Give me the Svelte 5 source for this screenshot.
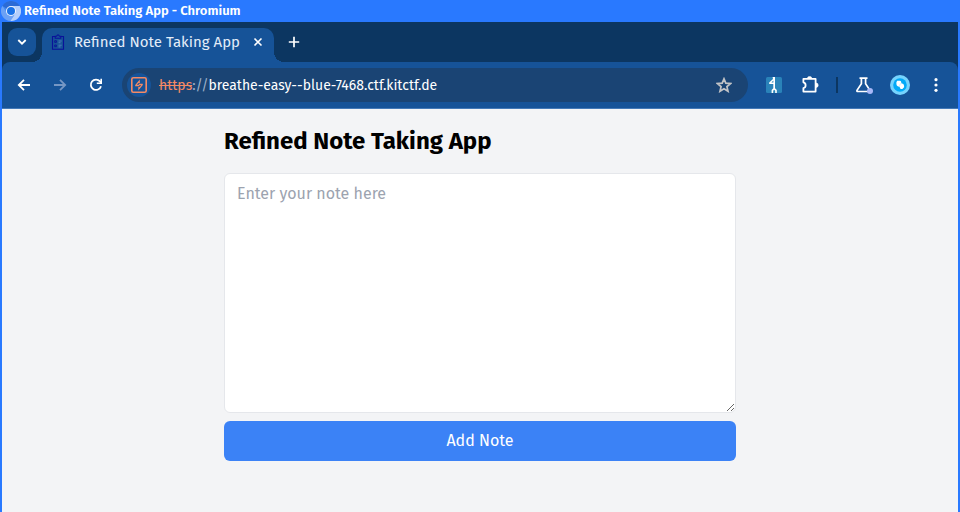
<script>
  let note = $state('');
  let notes = $state([]);
  let host = $state('breathe-easy--blue-7468.ctf.kitctf.de');

  function addNote(event) {
    event.preventDefault();
    if (note.trim()) notes.push(note.trim());
    note = '';
  }
</script>

<div class="window">
  <div class="titlebar">
    <svg width="20" height="20" viewBox="0 0 20 20" aria-hidden="true">
      <circle cx="10" cy="10" r="10" fill="#4488ee" />
      <path d="M10 10 1.4 4.9A10 10 0 0 1 18.7 5Z" fill="#2b6bd6" />
      <path d="M1.4 4.9A10 10 0 0 0 10 20L14 12 6 12Z" fill="#6ba1f5" />
      <path d="M10 5H18.7A10 10 0 0 1 9.5 20L14.3 12.5Z" fill="#b4cffb" />
      <circle cx="10" cy="10" r="5" fill="#eef4ff" />
      <circle cx="10" cy="10" r="4" fill="#1a73e8" />
    </svg>
    <span>Refined Note Taking App - Chromium</span>
  </div>

  <div class="frame">
    <div class="tabs">
      <button class="search" aria-label="Search tabs">
        <svg width="10" height="8" viewBox="0 0 10 8"><path d="M1.3 2 5 5.7 8.7 2" fill="none" stroke="#fff" stroke-width="1.8" /></svg>
      </button>
      <div class="tab">
        <svg width="16" height="16" viewBox="0 0 16 16" fill="none" stroke="#0a1299" aria-hidden="true">
          <path d="M5 2.5H2.5V15.3H13.5V2.5H11" stroke-width="1.1" />
          <path d="M5.2 4.2V2.2H6.5Q8-.4 9.5 2.2h1.3v2Z" stroke-width="1.1" />
          <path d="M4.7 6.7h1.7v1.7H4.7zM4.7 11h1.7v1.7H4.7z" stroke-width=".9" />
          <path d="M8.5 7h3.2M8.5 8.7h2M8.5 11.2h3.2M8.5 12.9h2" stroke="#4f7fbd" stroke-width=".9" />
        </svg>
        <span>Refined Note Taking App</span>
        <button class="close" aria-label="Close tab">
          <svg width="10" height="10" viewBox="0 0 10 10"><path d="m1.5 1.5 7 7m0-7-7 7" stroke="#fff" stroke-width="1.6" /></svg>
        </button>
      </div>
      <button class="new" aria-label="New tab">
        <svg width="12" height="12" viewBox="0 0 12 12"><path d="M6 .8v10.4M.8 6h10.4" stroke="#fff" stroke-width="1.7" /></svg>
      </button>
    </div>

    <div class="toolbar">
      <button class="tool" aria-label="Back">
        <svg width="14" height="14" viewBox="0 0 14 14" fill="none" stroke="#fff" stroke-width="1.8"><path d="M13 7H2M7 1.8 1.8 7 7 12.2" /></svg>
      </button>
      <button class="tool" aria-label="Forward" disabled>
        <svg width="14" height="14" viewBox="0 0 14 14" fill="none" stroke="#7697c4" stroke-width="1.8"><path d="M1 7h11M7 1.8 12.2 7 7 12.2" /></svg>
      </button>
      <button class="tool" aria-label="Reload">
        <svg width="14" height="14" viewBox="0 0 14 14"><path d="M12 8.2A5.2 5.2 0 1 1 11 3.4L12 4.6" fill="none" stroke="#fff" stroke-width="1.8" /><path d="M13 .8V6H7.8V4.4H11.4V.8Z" fill="#fff" /></svg>
      </button>

      <div class="omnibox">
        <button class="site" aria-label="View site information">
          <svg width="16" height="16" viewBox="0 0 16 16"><rect x=".8" y=".8" width="14.4" height="14.4" rx="1.5" fill="none" stroke="#f58a64" stroke-width="1.6" /><path d="M8.8 2.6V6H7.4L6 7.9H8.4V9.2H4.2V8.1ZM7.3 13.4V10H8.7L10 8.1H7.7V6.8H11.8V7.9Z" fill="#f58a64" /></svg>
        </button>
        <label for="address"><s>https</s><span>://</span></label>
        <input id="address" type="text" bind:value={host} spellcheck="false" />
        <button class="star" aria-label="Bookmark this tab">
          <svg width="16" height="16" viewBox="0 0 24 24"><path d="m12 2.8 2.7 6.5 7 .6-5.3 4.6 1.6 6.9-6-3.7-6 3.7 1.6-6.9-5.3-4.6 7-.6Z" fill="none" stroke="#c1c3c6" stroke-width="2.6" /></svg>
        </button>
      </div>

      <button class="tool" aria-label="Proxy extension">
        <svg width="16" height="16" viewBox="0 0 16 16"><rect width="16" height="16" rx="1.5" fill="#2a83b9" /><path d="M6.6 0H9V11.2L10.8 13v3H9.2V13.8L8.2 12.8 7.2 13.8V16H5.6V13L7.3 11.3V7H3.2V5.6L7 2Z" fill="#fff" /><path d="m5.4 5.5 2-2.1v2.1Z" fill="#2a83b9" /></svg>
      </button>
      <button class="tool" aria-label="Extensions">
        <svg width="18" height="18" viewBox="0 0 18 18"><path d="M2.4 2.9H14.6V15.6H2.4V12.2Q4.6 11.6 4.6 9.2T2.4 6.3Z" fill="none" stroke="#fff" stroke-width="1.8" stroke-linejoin="round" /><path d="M6.4 2.6a2.2 2.2 0 0 1 4.4 0ZM15 7a2.2 2.2 0 0 1 0 4.4Z" fill="#fff" stroke="#fff" stroke-width=".6" /></svg>
      </button>
      <span class="divider"></span>
      <button class="tool" aria-label="Experiments">
        <svg width="18" height="18" viewBox="0 0 18 18"><path d="M4.5 2.2h8M6.4 2.5v5.3L2 14.3q-.4 1.2.8 1.2h11.4q1.2 0 .8-1.2l-4.4-6.5V2.5" fill="none" stroke="#fff" stroke-width="1.7" /><circle cx="15" cy="15" r="3" fill="#a8b8f8" /></svg>
      </button>
      <button class="tool" aria-label="Profile">
        <svg width="20" height="20" viewBox="0 0 20 20"><circle cx="10" cy="10" r="10" fill="#76d3fd" /><circle cx="10" cy="10" r="6.8" fill="#02aaf7" /><path d="M7.2 5.7H10q1.3 0 1.3 2v.6q2.8.4 2.8 2.5v1.5l-1.7 1.6h-1.2q-1.4 0-1.6-2.2-2.9 0-3.2-2.7V7.2Z" fill="#fff" /><path d="M9.5 11.4q.1-3 1.8-3.1" fill="none" stroke="#b6e6ff" stroke-width=".7" /></svg>
      </button>
      <button class="tool" aria-label="Menu">
        <svg width="4" height="16" viewBox="0 0 4 16" fill="#fff"><circle cx="2" cy="2.7" r="1.6" /><circle cx="2" cy="8" r="1.6" /><circle cx="2" cy="13.3" r="1.6" /></svg>
      </button>
    </div>

    <main>
      <form onsubmit={addNote}>
        <h1>Refined Note Taking App</h1>
        <textarea bind:value={note} placeholder="Enter your note here" aria-label="Note"></textarea>
        <button class="add" type="submit">Add Note</button>
        {#each notes as item}
          <p>{item}</p>
        {/each}
      </form>
    </main>
  </div>
</div>

<style>
  :global(body) {
    margin: 0;
  }
  .window,
  .window * {
    box-sizing: border-box;
  }
  .window {
    display: flex;
    flex-direction: column;
    min-height: 100vh;
    background: #2979ff;
    font-family: 'Fira Sans', 'Noto Sans', sans-serif;
  }
  button,
  input,
  textarea {
    font: inherit;
  }
  button {
    display: flex;
    align-items: center;
    justify-content: center;
    flex: none;
    padding: 0;
    border: 0;
    background: none;
  }
  svg {
    display: block;
    flex: none;
  }
  .titlebar {
    display: flex;
    align-items: center;
    gap: 3px;
    height: 22px;
    padding-left: 1px;
    color: #fff;
    font-size: 13px;
    font-weight: 600;
    line-height: 20px;
  }
  .frame {
    display: flex;
    flex: 1;
    flex-direction: column;
    margin: 0 2px;
    background: #0c3661;
  }
  .tabs {
    display: flex;
    height: 40px;
    padding: 6px 6px 0;
  }
  .search {
    width: 28px;
    height: 28px;
    margin-right: 6px;
    border-radius: 9px;
    background: #165398;
  }
  .tab {
    position: relative;
    display: flex;
    align-items: center;
    width: 232px;
    padding: 0 8px 6px;
    border-radius: 10px 10px 0 0;
    background: #165398;
    color: #e3edf8;
    font-size: 15px;
  }
  .tab::before,
  .tab::after {
    position: absolute;
    bottom: 0;
    width: 10px;
    height: 10px;
    content: '';
  }
  .tab::before {
    right: 100%;
    background: radial-gradient(circle at 0 0, transparent 10px, #165398 10px);
  }
  .tab::after {
    left: 100%;
    background: radial-gradient(circle at 100% 0, transparent 10px, #165398 10px);
  }
  .tab span {
    flex: 1;
    margin-left: 8px;
    white-space: nowrap;
  }
  .close {
    width: 16px;
    height: 16px;
  }
  .new {
    width: 28px;
    height: 28px;
    margin-left: 6px;
  }
  .toolbar {
    display: flex;
    align-items: center;
    height: 47px;
    padding: 0 4px;
    border-bottom: 1px solid #4479b7;
    border-radius: 8px 8px 0 0;
    background: #165398;
  }
  .tool {
    width: 36px;
    height: 34px;
  }
  .omnibox {
    display: flex;
    align-items: center;
    flex: 1;
    min-width: 0;
    height: 34px;
    margin: 0 8px;
    padding: 0 12px 0 5px;
    border-radius: 17px;
    background: #1a4474;
    font-size: 14px;
  }
  .site {
    width: 24px;
    height: 24px;
    margin-right: 8px;
    border-radius: 12px;
    background: #165398;
  }
  .omnibox s {
    color: #f58a64;
  }
  .omnibox span {
    color: #9db1c8;
  }
  .omnibox input {
    flex: 1;
    min-width: 0;
    padding: 0;
    border: 0;
    outline: 0;
    background: none;
    color: #fff;
  }
  .star {
    width: 24px;
    height: 24px;
  }
  .divider {
    width: 2px;
    height: 16px;
    margin: 0 8px;
    background: #0c3661;
  }
  main {
    flex: 1;
    padding: 16px;
    background: #f3f4f6;
  }
  form {
    max-width: 512px;
    margin: 0 auto;
  }
  h1 {
    margin: 0 0 16px;
    color: #000;
    font-size: 24px;
    font-weight: 700;
    line-height: 32px;
  }
  textarea {
    display: block;
    width: 100%;
    height: 240px;
    padding: 8px 12px;
    border: 1px solid #e5e7eb;
    border-radius: 6px;
    outline: 0;
    background: #fff;
    color: #111827;
    font-size: 16px;
    line-height: 24px;
    resize: both;
  }
  textarea::placeholder {
    color: #9ca3af;
  }
  .add {
    width: 100%;
    height: 40px;
    margin-top: 8px;
    border-radius: 6px;
    background: #3b82f6;
    color: #fff;
    font-size: 16px;
    line-height: 24px;
  }
</style>
